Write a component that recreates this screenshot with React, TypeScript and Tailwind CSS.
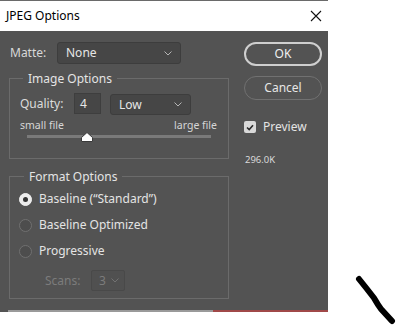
import React from "react";

const font = { fontFamily: '"Noto Sans", "Liberation Sans", sans-serif' };

function Chevron({ color = "#b5b5b5" }: { color?: string }) {
  return (
    <svg width="8" height="5" viewBox="0 0 8 5" className="shrink-0">
      <path d="M0.5 0.5 L4 4 L7.5 0.5" fill="none" stroke={color} strokeWidth="1" />
    </svg>
  );
}

function Select({ label, className }: { label: string; className: string }) {
  return (
    <div
      className={`flex items-center justify-between rounded-[3px] border border-[#3d3d3d] bg-[#464646] pl-[8px] pr-[8px] text-[12px] text-[#e6e6e6] ${className}`}
    >
      <span>{label}</span>
      <Chevron />
    </div>
  );
}

function Radio({ checked, label }: { checked?: boolean; label: string }) {
  return (
    <div className="flex h-[26px] items-center gap-[7px]">
      <div
        className={`flex h-[13px] w-[13px] items-center justify-center rounded-full border ${
          checked ? "border-[#f0f0f0] bg-[#ececec]" : "border-[#707070] bg-[#4d4d4d]"
        }`}
      >
        {checked && <div className="h-[5px] w-[5px] rounded-full bg-[#333333]" />}
      </div>
      <span className="text-[12px] text-[#e4e4e4]">{label}</span>
    </div>
  );
}

export default function App() {
  return (
    <div className="relative h-[325px] w-[396px] overflow-hidden bg-white" style={font}>
      <div className="w-[328px]">
        <div className="h-[1px] bg-[#6a6a6a]" />
        <div className="flex h-[30px] items-center justify-between bg-white pl-[6px] pr-[5px]">
          <span className="text-[12px] text-black">JPEG Options</span>
          <svg width="12" height="12" viewBox="0 0 12 12" className="mr-[1px]">
            <path d="M1 1 L11 11 M11 1 L1 11" stroke="#111" strokeWidth="1.1" />
          </svg>
        </div>
        <div className="flex h-[279px] bg-[#535353]">
          {/* left column */}
          <div className="w-[229px] pl-[9px] pt-[11px]">
            <div className="flex h-[22px] items-center">
              <span className="w-[48px] pl-[1px] text-[12px] text-[#d8d8d8]">Matte:</span>
              <Select label="None" className="h-[22px] w-[124px]" />
            </div>

            <fieldset className="mt-[6px] h-[89px] w-[220px] border border-[#6b6b6b] px-[10px]">
              <legend className="ml-[3px] px-[5px] text-[12px] leading-[17px] text-[#e4e4e4]">
                Image Options
              </legend>
              <div className="mt-[6px] flex items-start">
                <span className="mt-[2px] w-[54px] text-[12px] text-[#dcdcdc]">Quality:</span>
                <div className="flex h-[21px] w-[27px] items-center border border-[#3e3e3e] bg-[#464646] pl-[5px] text-[12px] text-[#e6e6e6]">
                  4
                </div>
                <Select label="Low" className="ml-[9px] mt-[1px] h-[21px] w-[81px]" />
              </div>
              <div className="mt-[3px] flex justify-between pr-[1px] text-[10.5px] leading-[14px] text-[#d6d6d6]">
                <span>small file</span>
                <span>large file</span>
              </div>
              <div className="relative mx-[7px] mt-[3px] h-[3px] bg-[#7a7a7a]">
                <svg
                  width="12"
                  height="10"
                  viewBox="0 0 12 10"
                  className="absolute left-[54px] top-[-3px]"
                >
                  <path d="M6 0.5 L11.5 5.5 L11.5 9.5 L0.5 9.5 L0.5 5.5 Z" fill="#ffffff" stroke="#3a3a3a" strokeWidth="1" />
                </svg>
              </div>
            </fieldset>

            <fieldset className="mt-[9px] h-[131px] w-[220px] border border-[#6b6b6b] pl-[9px]">
              <legend className="ml-[5px] px-[5px] text-[12px] leading-[17px] text-[#e4e4e4]">
                Format Options
              </legend>
              <div className="mt-[1px]">
                <Radio checked label={"Baseline (\u201CStandard\u201D)"} />
                <Radio label="Baseline Optimized" />
                <Radio label="Progressive" />
              </div>
              <div className="mt-[6px] flex items-center pl-[26px]">
                <span className="w-[46px] text-[12px] text-[#7c7c7c]">Scans:</span>
                <div className="flex h-[21px] w-[34px] items-center justify-between rounded-[2px] border border-[#494949] bg-[#505050] pl-[7px] pr-[5px] text-[12px] text-[#7c7c7c]">
                  <span>3</span>
                  <Chevron color="#727272" />
                </div>
              </div>
            </fieldset>
          </div>

          {/* right column */}
          <div className="flex flex-col pl-[15px] pt-[11px]">
            <button className="flex h-[24px] w-[78px] items-center justify-center rounded-full border-2 border-[#cfcfcf] text-[12px] text-[#f0f0f0]">
              OK
            </button>
            <button className="mt-[10px] flex h-[24px] w-[78px] items-center justify-center rounded-full border border-[#717171] text-[12px] text-[#e6e6e6]">
              Cancel
            </button>
            <div className="mt-[18px] flex items-center gap-[7px]">
              <div className="flex h-[12px] w-[12px] items-center justify-center rounded-[2px] bg-[#d9d9d9]">
                <svg width="8" height="7" viewBox="0 0 8 7">
                  <path d="M1 3.5 L3.2 5.6 L7 1.2" fill="none" stroke="#2b2b2b" strokeWidth="1.6" />
                </svg>
              </div>
              <span className="text-[12px] text-[#e4e4e4]">Preview</span>
            </div>
            <span className="mt-[17px] pl-[1px] text-[9.5px] text-[#d8d8d8]">296.0K</span>
          </div>
        </div>
        <div className="flex h-[2px]">
          <div className="w-[8px] bg-[#535353]" />
          <div className="w-[205px] bg-[#9a9a9a]" />
          <div className="flex-1 bg-[#a04848]" />
        </div>
      </div>

      <svg width="396" height="325" className="absolute left-0 top-0" viewBox="0 0 396 325">
        <path
          d="M359 279 L367 289 L374 298 Q378 305 381 309 L392 321"
          fill="none"
          stroke="#000"
          strokeWidth="6"
          strokeLinecap="round"
          strokeLinejoin="round"
        />
      </svg>
    </div>
  );
}
